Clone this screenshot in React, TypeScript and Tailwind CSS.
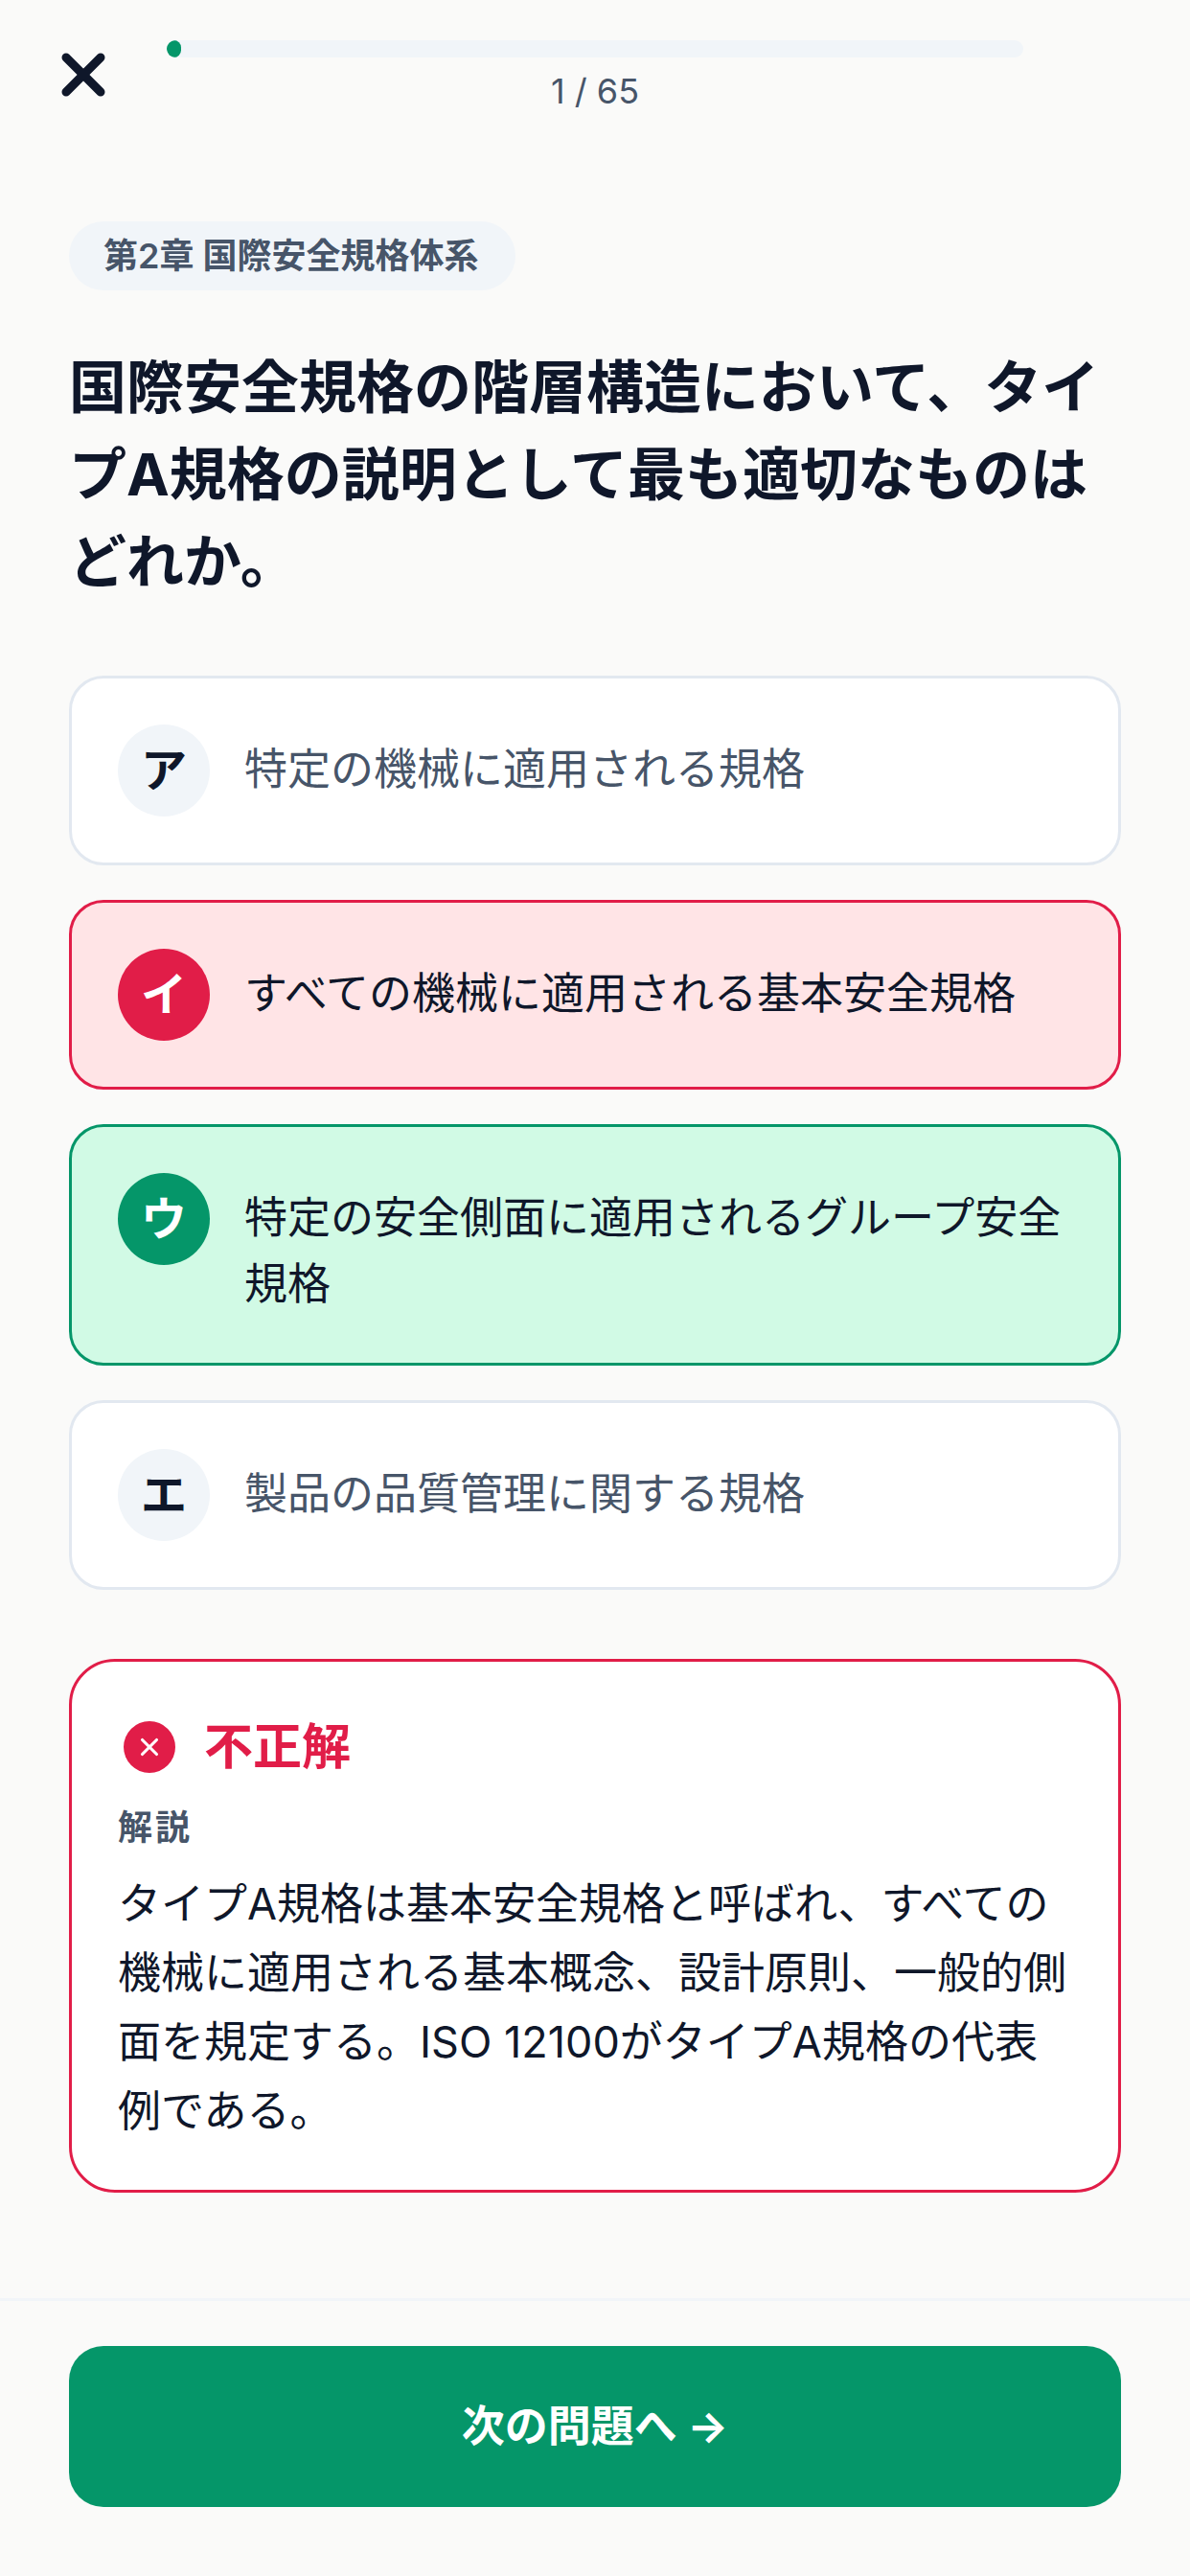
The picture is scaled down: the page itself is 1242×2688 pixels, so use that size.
import { X } from "lucide-react";

const FONT = "[font-family:Inter,'Noto_Sans_CJK_JP',sans-serif]";

type Kind = "plain" | "wrong" | "right";

function Option({ mark, text, kind }: { mark: string; text: string; kind: Kind }) {
  const card =
    kind === "wrong"
      ? "border-[#e11d48] bg-[#ffe4e6]"
      : kind === "right"
        ? "border-[#059669] bg-[#d1fae5]"
        : "border-[#e2e8f0] bg-white";
  const badge =
    kind === "wrong"
      ? "bg-[#e11d48] text-white"
      : kind === "right"
        ? "bg-[#059669] text-white"
        : "bg-[#f1f5f9] text-[#0f172a]";
  const label = kind === "plain" ? "text-[#475569]" : "text-[#0f172a]";
  return (
    <div className={`flex items-start gap-[36px] rounded-[36px] border-[3px] p-[48px] ${card}`}>
      <div className={`flex h-[96px] w-[96px] shrink-0 items-center justify-center rounded-full text-[48px] font-bold ${badge}`}>
        {mark}
      </div>
      <div className={`flex-1 pt-[12px] text-[45px] leading-[69px] ${label}`}>{text}</div>
    </div>
  );
}

export default function App() {
  return (
    <div className={`flex min-h-screen flex-col bg-[#fafaf9] ${FONT}`}>
      <header className="grid grid-cols-[174px_1fr_174px] pt-[42px]">
        <div className="pl-[51px]">
          <X className="h-[72px] w-[72px] text-[#0f172a]" strokeWidth={3} />
        </div>
        <div className="flex flex-col items-center">
          <div className="h-[18px] w-full overflow-hidden rounded-full bg-[#f1f5f9]">
            <div className="h-full w-[15px] rounded-full bg-[#059669]" />
          </div>
          <div className="mt-[8px] text-[36px] leading-[54px] text-[#475569]">1 / 65</div>
        </div>
        <div />
      </header>

      <main className="flex flex-1 flex-col px-[72px] pt-[109px]">
        <div className="self-start rounded-full bg-[#f1f5f9] py-[9px] pl-[36px] pr-[38px] text-[36px] font-semibold leading-[54px] text-[#475569]">
          第2章 国際安全規格体系
        </div>
        <h1 className="mt-[56px] text-[60px] font-bold leading-[91px] text-[#0f172a]">
          国際安全規格の階層構造において、タイプA規格の説明として最も適切なものはどれか。
        </h1>
        <div className="mt-[73px] flex flex-col gap-[36px]">
          <Option mark="ア" text="特定の機械に適用される規格" kind="plain" />
          <Option mark="イ" text="すべての機械に適用される基本安全規格" kind="wrong" />
          <Option mark="ウ" text="特定の安全側面に適用されるグループ安全規格" kind="right" />
          <Option mark="エ" text="製品の品質管理に関する規格" kind="plain" />
        </div>
        <section className="mt-[72px] rounded-[48px] border-[3px] border-[#e11d48] bg-white px-[48px] pb-[46px] pt-[48px]">
          <div className="flex items-center gap-[30px] pl-[6px]">
            <div className="flex h-[54px] w-[54px] items-center justify-center rounded-full bg-[#e11d48]">
              <X className="h-[30px] w-[30px] text-white" strokeWidth={2.5} />
            </div>
            <div className="text-[51px] font-bold leading-[82px] text-[#e11d48]">不正解</div>
          </div>
          <div className="mt-[16px] text-[36px] font-semibold leading-[54px] tracking-[3px] text-[#475569]">解説</div>
          <p className="mt-[17px] text-[45px] leading-[72px] text-[#0f172a]">
            タイプA規格は基本安全規格と呼ばれ、すべての機械に適用される基本概念、設計原則、一般的側面を規定する。ISO 12100がタイプA規格の代表例である。
          </p>
        </section>
      </main>

      <footer className="border-t-[3px] border-[#f1f5f9] px-[72px] pb-[72px] pt-[47px]">
        <button className="flex h-[168px] w-full items-center justify-center rounded-[36px] bg-[#059669] text-[45px] font-bold text-white">
          次の問題へ →
        </button>
      </footer>
    </div>
  );
}
